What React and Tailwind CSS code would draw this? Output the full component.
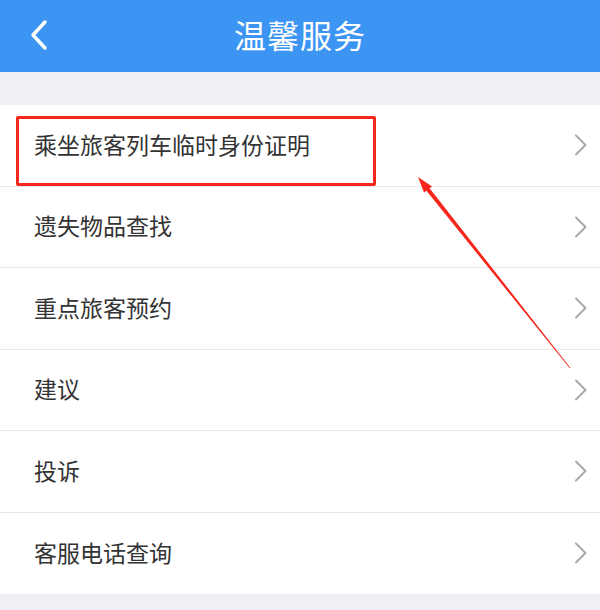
import React from 'react';

const items = [
  '乘坐旅客列车临时身份证明',
  '遗失物品查找',
  '重点旅客预约',
  '建议',
  '投诉',
  '客服电话查询',
];

function Chevron() {
  return (
    <svg width="14" height="22" viewBox="0 0 14 22" fill="none">
      <path d="M2 1.5 L11.5 11 L2 20.5" stroke="#a8a8a8" strokeWidth="2" strokeLinecap="round" strokeLinejoin="round" />
    </svg>
  );
}

export default function App() {
  return (
    <div className="relative w-[600px] h-[610px] overflow-hidden bg-[#efeff4]" style={{ fontFamily: '"Noto Sans", "Noto Sans CJK SC", sans-serif' }}>
      <div className="relative h-[72px] bg-[#3d95f3] flex items-center justify-center">
        <svg className="absolute left-[28px] top-[19px]" width="22" height="32" viewBox="0 0 22 32" fill="none">
          <path d="M17 3 L5 16 L17 29" stroke="#ffffff" strokeWidth="3.5" strokeLinecap="round" strokeLinejoin="round" />
        </svg>
        <span className="text-white text-[32px] leading-none tracking-[1px]">温馨服务</span>
      </div>

      <div className="mt-[33px] bg-white">
        {items.map((t, i) => (
          <div key={i} className="relative h-[81.5px] flex items-center justify-between pl-[34px] pr-[12px] border-b border-[#e9e9ec] last:border-b-0">
            <span className="text-[23px] text-[#333333] leading-none">{t}</span>
            <Chevron />
            {i === 0 && (
              <div className="absolute left-[16px] top-[11px] w-[360px] h-[70px] border-[3px] border-[#f5261c] rounded-[2px]" />
            )}
          </div>
        ))}
      </div>

      <svg className="absolute left-0 top-0 pointer-events-none" width="600" height="610">
        <polygon
          points="418,177 432,186.4 429.6,188.3 570.3,367.7 569.7,368.3 426.4,190.7 424,192.6"
          fill="#f5261c"
        />
      </svg>
    </div>
  );
}
